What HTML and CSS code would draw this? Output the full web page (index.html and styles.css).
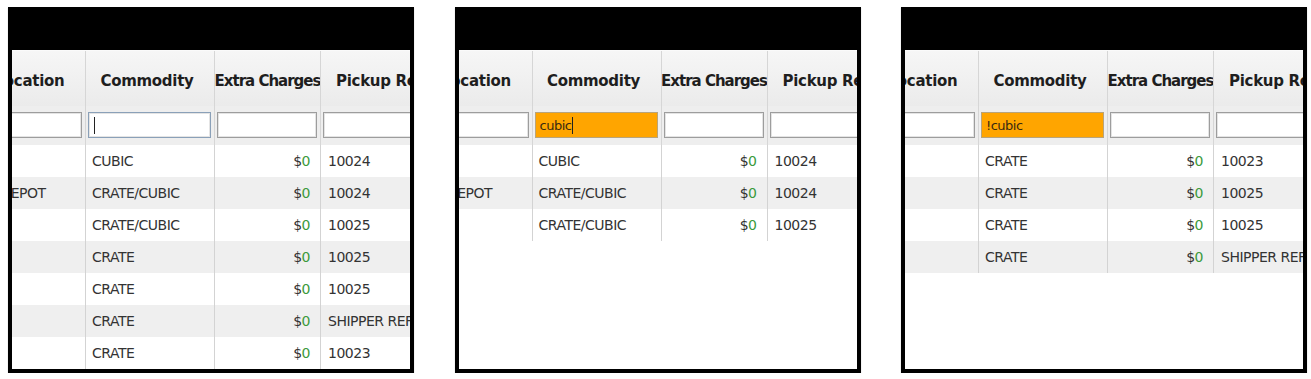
FILE: index.html
```html
<!DOCTYPE html>
<html lang="en">
<head>
  <meta charset="UTF-8" />
  <title>Grid filter states</title>
  <link rel="stylesheet" href="styles.css">
</head>
<body>

  <div class="shots">

    <!-- empty filter -->
    <div class="panel">
      <div class="titlebar"></div>
      <div class="viewport">
        <div class="grid">
          <div class="row hdr">
            <div class="cell">Location</div>
            <div class="cell">Commodity</div>
            <div class="cell tight">Extra Charges</div>
            <div class="cell">Pickup Ref</div>
          </div>
          <div class="row filters">
            <div class="cell"><span class="box"></span></div>
            <div class="cell"><span class="box focus"><i class="caret"></i></span></div>
            <div class="cell"><span class="box"></span></div>
            <div class="cell"><span class="box"></span></div>
          </div>
          <div class="row"><div class="cell"></div><div class="cell">CUBIC</div><div class="cell money">$<b>0</b></div><div class="cell">10024</div></div>
          <div class="row alt"><div class="cell">UK DEPOT</div><div class="cell">CRATE/CUBIC</div><div class="cell money">$<b>0</b></div><div class="cell">10024</div></div>
          <div class="row"><div class="cell"></div><div class="cell">CRATE/CUBIC</div><div class="cell money">$<b>0</b></div><div class="cell">10025</div></div>
          <div class="row alt"><div class="cell"></div><div class="cell">CRATE</div><div class="cell money">$<b>0</b></div><div class="cell">10025</div></div>
          <div class="row"><div class="cell"></div><div class="cell">CRATE</div><div class="cell money">$<b>0</b></div><div class="cell">10025</div></div>
          <div class="row alt"><div class="cell"></div><div class="cell">CRATE</div><div class="cell money">$<b>0</b></div><div class="cell">SHIPPER REF</div></div>
          <div class="row"><div class="cell"></div><div class="cell">CRATE</div><div class="cell money">$<b>0</b></div><div class="cell">10023</div></div>
        </div>
      </div>
    </div>

    <!-- "cubic" filter -->
    <div class="panel">
      <div class="titlebar"></div>
      <div class="viewport">
        <div class="grid">
          <div class="row hdr">
            <div class="cell">Location</div>
            <div class="cell">Commodity</div>
            <div class="cell tight">Extra Charges</div>
            <div class="cell">Pickup Ref</div>
          </div>
          <div class="row filters">
            <div class="cell"><span class="box"></span></div>
            <div class="cell"><span class="box on">cubic<i class="caret"></i></span></div>
            <div class="cell"><span class="box"></span></div>
            <div class="cell"><span class="box"></span></div>
          </div>
          <div class="row"><div class="cell"></div><div class="cell">CUBIC</div><div class="cell money">$<b>0</b></div><div class="cell">10024</div></div>
          <div class="row alt"><div class="cell">UK DEPOT</div><div class="cell">CRATE/CUBIC</div><div class="cell money">$<b>0</b></div><div class="cell">10024</div></div>
          <div class="row"><div class="cell"></div><div class="cell">CRATE/CUBIC</div><div class="cell money">$<b>0</b></div><div class="cell">10025</div></div>
        </div>
      </div>
    </div>

    <!-- "!cubic" filter -->
    <div class="panel">
      <div class="titlebar"></div>
      <div class="viewport">
        <div class="grid">
          <div class="row hdr">
            <div class="cell">Location</div>
            <div class="cell">Commodity</div>
            <div class="cell tight">Extra Charges</div>
            <div class="cell">Pickup Ref</div>
          </div>
          <div class="row filters">
            <div class="cell"><span class="box"></span></div>
            <div class="cell"><span class="box on">!cubic</span></div>
            <div class="cell"><span class="box"></span></div>
            <div class="cell"><span class="box"></span></div>
          </div>
          <div class="row"><div class="cell"></div><div class="cell">CRATE</div><div class="cell money">$<b>0</b></div><div class="cell">10023</div></div>
          <div class="row alt"><div class="cell"></div><div class="cell">CRATE</div><div class="cell money">$<b>0</b></div><div class="cell">10025</div></div>
          <div class="row"><div class="cell"></div><div class="cell">CRATE</div><div class="cell money">$<b>0</b></div><div class="cell">10025</div></div>
          <div class="row alt"><div class="cell"></div><div class="cell">CRATE</div><div class="cell money">$<b>0</b></div><div class="cell">SHIPPER REF</div></div>
        </div>
      </div>
    </div>

  </div>

</body>
</html>
```

FILE: styles.css
```css
* { box-sizing: border-box; margin: 0; padding: 0; }

body {
  background: #fff;
  font-family: "DejaVu Sans", Verdana, sans-serif;
  color: #333;
}

.shots {
  display: flex;
  justify-content: space-between;
  padding: 7px 4px 0 8px;
}

.panel {
  width: 406px;
  height: 366px;
  background: #000;
  padding: 0 4px 4px;
  display: flex;
  flex-direction: column;
  box-shadow: 0 1px 1px rgba(0,0,0,0.25);
}

.titlebar { height: 43px; flex: none; }

.viewport {
  flex: 1;
  background: #fff;
  overflow: hidden;
}

/* grid is scrolled horizontally, Location column half hidden */
.grid { margin-left: -42px; width: 500px; }

.row {
  display: grid;
  grid-template-columns: 116px 129px 106px 149px;
  height: 32px;
  font-size: 14px;
  letter-spacing: -0.5px;
}

.row.alt { background: #efefef; }

.cell {
  border-right: 1px solid #d3d3d3;
  white-space: nowrap;
  overflow: hidden;
  display: flex;
  align-items: center;
  padding: 0 6px;
}

.cell:first-child { padding-left: 8px; }
.cell:last-child { border-right: none; padding-left: 7px; }

.money { justify-content: flex-end; padding-right: 10px; color: #333; }
.money b { font-weight: normal; color: #3b9a3b; }

.hdr {
  height: 56px;
  background: linear-gradient(#f6f6f6, #ebebeb);
  border-top: 1px solid #fafafa;
  font-weight: bold;
  font-size: 15px;
  letter-spacing: -0.3px;
  color: #1e1e1e;
}

.hdr .cell { justify-content: center; padding-top: 4px; border-right-color: #d6d6d6; }
.hdr .cell:first-child { padding-left: 10px; }
.hdr .cell:nth-child(2) { padding-right: 12px; }
.hdr .cell:last-child { justify-content: flex-start; padding-left: 15px; }
.hdr .tight { letter-spacing: -1px; padding: 4px 0 0; }

.filters {
  height: 39px;
  background: #eeeeee;
}

.filters .cell { padding: 0 3px 1px 2px; border-right-color: #d6d6d6; }

.box {
  display: flex;
  align-items: center;
  width: 100%;
  height: 26px;
  background: #fff;
  border: 1px solid #9d9d9d;
  box-shadow: inset 0 0 0 1px #e4e4e4;
  padding: 0 4px;
  font-size: 13px;
  color: #3a2a10;
}

.box.focus { border-color: #8aa0b8; }
.box.on { background: #ffa500; border-color: #b9a47a; box-shadow: none; }

.caret {
  display: inline-block;
  width: 1px;
  height: 17px;
  background: #222;
  margin-left: 1px;
}
```
